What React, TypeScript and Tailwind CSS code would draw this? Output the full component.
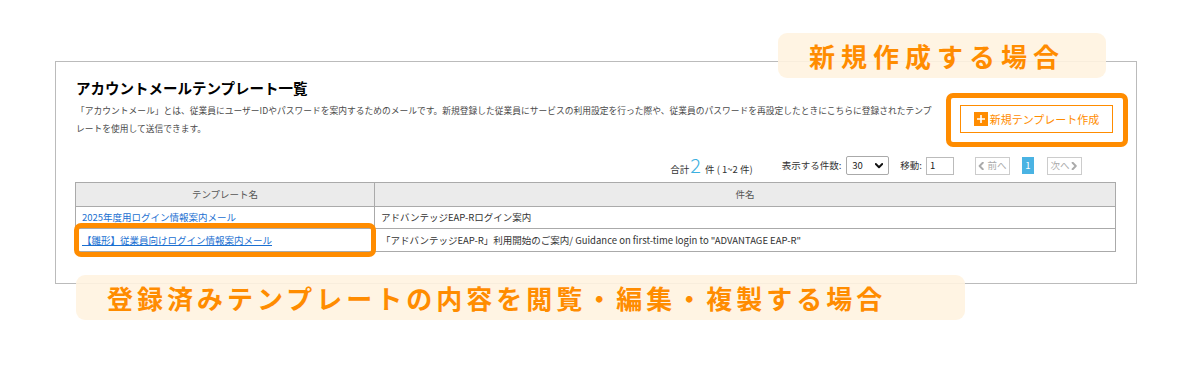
const templates = [
  {
    name: '2025年度用ログイン情報案内メール',
    subject: 'アドバンテッジEAP-Rログイン案内',
    underline: false,
  },
  {
    name: '【雛形】従業員向けログイン情報案内メール',
    subject: '「アドバンテッジEAP-R」利用開始のご案内/ Guidance on first-time login to "ADVANTAGE EAP-R"',
    underline: true,
  },
]

function Chevron({ dir }: { dir: 'left' | 'right' | 'down' }) {
  const d = dir === 'left' ? 'M6 1L2 5l4 4' : dir === 'right' ? 'M2 1l4 4-4 4' : 'M1 2.5l4 4 4-4'
  return (
    <svg viewBox="0 0 10 10" className="h-[8px] w-[8px]" fill="none" stroke="currentColor" strokeWidth="2.4" strokeLinecap="round" strokeLinejoin="round">
      <path d={d} />
    </svg>
  )
}

export default function App() {
  return (
    <div className="relative h-[369px] w-[1196px] overflow-hidden bg-white font-['Noto_Sans_CJK_JP','Noto_Sans',sans-serif]">
      <div className="ml-[55px] mt-[61px] flex h-[223px] w-[1082px] flex-col border border-[#bbbbbb] px-[20px] pt-[15px]">
        <div className="flex items-start">
          <div className="flex-1">
            <h2 className="text-[14.5px] font-bold leading-[22px] text-black">アカウントメールテンプレート一覧</h2>
            <p className="mt-[3px] whitespace-nowrap text-[8.75px] leading-[18px] text-[#4a4a4a]">
              「アカウントメール」とは、従業員にユーザーIDやパスワードを案内するためのメールです。新規登録した従業員にサービスの利用設定を行った際や、従業員のパスワードを再設定したときにこちらに登録されたテンプ
              <br />
              レートを使用して送信できます。
            </p>
          </div>
          <div className="relative mr-[3px] mt-[28px]">
            <button className="flex h-[28px] w-[153px] items-center justify-center gap-[2px] border border-[#ff8c00] bg-white text-[11px] text-[#ff8c00]">
              <span className="flex h-[14px] w-[14px] items-center justify-center bg-[#ff8c00]">
                <svg viewBox="0 0 14 14" className="h-[14px] w-[14px]" stroke="white" strokeWidth="1.6">
                  <path d="M7 3v8M3 7h8" />
                </svg>
              </span>
              新規テンプレート作成
            </button>
            <div className="absolute -bottom-[14px] -left-[14px] -right-[15px] -top-[12px] rounded-[7px] border-[5px] border-[#ff8c00]" />
          </div>
        </div>

        <div className="mt-[18px] flex h-[19px] items-center justify-end pr-[34px] text-[9.5px] text-[#333333]">
          <span className="flex items-baseline">
            合計
            <span className="ml-[1px] mr-[4px] text-[20px] font-light leading-none text-[#3cb0e0]">2</span>
            件 ( 1~2 件)
          </span>
          <span className="ml-[29px]">表示する件数:</span>
          <div className="ml-[5px] flex h-[19px] w-[43px] items-center justify-between rounded-[2px] border border-[#aaaaaa] px-[5px] text-[#222222]">
            <span>30</span>
            <span className="text-[#111111]">
              <Chevron dir="down" />
            </span>
          </div>
          <span className="ml-[11px]">移動:</span>
          <div className="ml-[4px] flex h-[18px] w-[28px] items-center border border-[#bbbbbb] px-[3px] text-[#222222]">1</div>
          <div className="ml-[21px] flex h-[18px] w-[35px] items-center justify-center gap-[1px] border border-[#cccccc] text-[#aaaaaa]">
            <Chevron dir="left" />
            前へ
          </div>
          <div className="ml-[12px] flex h-[17px] w-[12px] items-center justify-center bg-[#4ab3e3] text-white">1</div>
          <div className="ml-[13px] flex h-[18px] w-[35px] items-center justify-center gap-[1px] border border-[#cccccc] text-[#aaaaaa]">
            次へ
            <Chevron dir="right" />
          </div>
        </div>

        <table className="-ml-[1px] mt-[7px] w-[1041px] border-collapse text-[9.5px]">
          <thead>
            <tr className="h-[24px] bg-[#ebebeb] text-[#555555]">
              <th className="w-[299px] border border-[#aaaaaa] font-normal">テンプレート名</th>
              <th className="border border-[#aaaaaa] font-normal">件名</th>
            </tr>
          </thead>
          <tbody>
            {templates.map((t, i) => (
              <tr key={t.name} className={i === 0 ? 'h-[22px]' : 'h-[23px]'}>
                <td className="relative border border-[#aaaaaa] pl-[6px]">
                  <a href="#" className={`text-[#1a6fd1] ${t.underline ? 'underline' : ''}`}>
                    {t.name}
                  </a>
                  {t.underline && (
                    <div className="absolute -bottom-[6px] -left-[2px] -right-[2px] -top-[6px] rounded-[7px] border-[5px] border-[#ff8c00]" />
                  )}
                </td>
                <td className="border border-[#aaaaaa] pl-[6px] text-[#333333]">{t.subject}</td>
              </tr>
            ))}
          </tbody>
        </table>
      </div>

      <div className="absolute left-[778px] top-[33px] flex h-[45px] w-[328px] items-center rounded-[9px] bg-[#fff3e0]/90 pl-[31px] text-[26px] font-bold leading-none tracking-[6px] text-[#ff8c00]">
        新規作成する場合
      </div>
      <div className="absolute left-[76px] top-[275px] flex h-[45px] w-[889px] items-center rounded-[9px] bg-[#fff3e0]/90 pl-[31px] text-[26px] font-bold leading-none tracking-[4px] text-[#ff8c00]">
        登録済みテンプレートの内容を閲覧・編集・複製する場合
      </div>
    </div>
  )
}
